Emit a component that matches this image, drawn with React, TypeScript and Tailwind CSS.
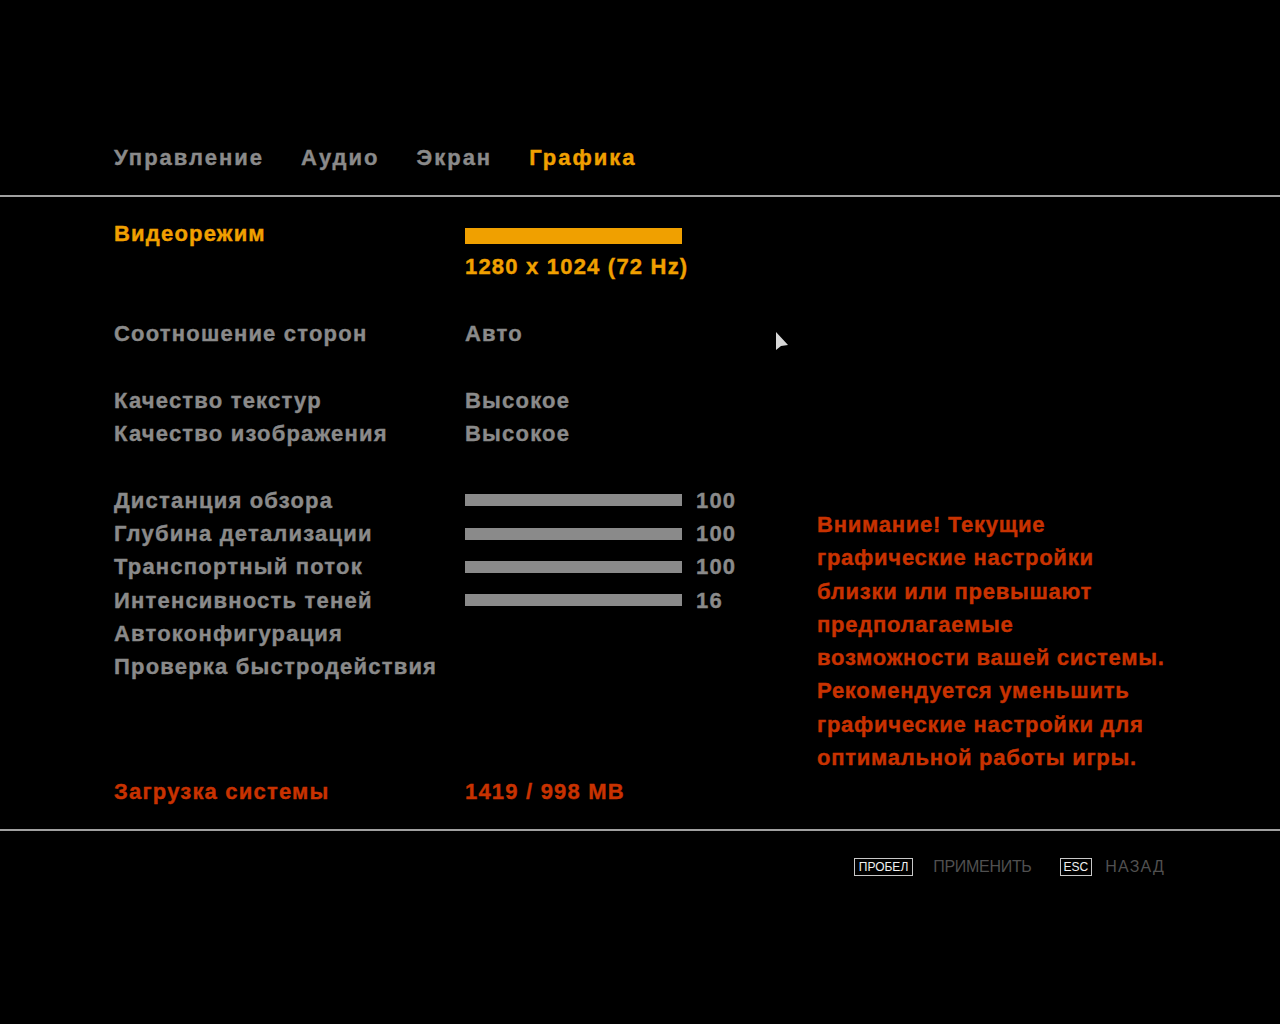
import React from "react";

const F = { fontFamily: '"Liberation Sans", Arial, sans-serif' };

function Row({ label, children, color = "text-[#8a8a8a]" }: { label?: string; children?: React.ReactNode; color?: string }) {
  return (
    <div className="flex h-[33.33px] items-center">
      <div className={`w-[351px] shrink-0 whitespace-nowrap ${color}`}>{label}</div>
      <div className="flex items-center whitespace-nowrap">{children}</div>
    </div>
  );
}

function Bar({ v }: { v: string }) {
  return (
    <>
      <div className="h-[12px] w-[217px] bg-[#8a8a8a]" />
      <div className="ml-[14px] text-[#8a8a8a]">{v}</div>
    </>
  );
}

export default function App() {
  return (
    <div className="relative h-[1024px] w-full overflow-hidden bg-black" style={F}>
      <div className="pt-[141px]">
        <div className="flex h-[33px] items-center gap-[37px] pl-[114px] text-[22px] font-bold tracking-[2px] [-webkit-text-stroke:0.4px_currentColor]">
          <span className="text-[#8a8a8a]">Управление</span>
          <span className="text-[#8a8a8a]">Аудио</span>
          <span className="text-[#8a8a8a]">Экран</span>
          <span className="text-[#f0a000]">Графика</span>
        </div>
        <div className="mt-[21px] h-[2px] w-full bg-[#a0a0a0]" />
        <div className="flex pl-[114px] pt-[20px] text-[22px] font-bold leading-[33px] tracking-[1.2px] [-webkit-text-stroke:0.4px_currentColor]">
          <div className="w-[703px] shrink-0">
            <Row label="Видеорежим" color="text-[#f0a000]">
              <div className="mt-[4px] h-[16px] w-[217px] bg-[#f0a000]" />
            </Row>
            <Row>
              <span className="text-[#f0a000]">1280 x 1024 (72 Hz)</span>
            </Row>
            <Row />
            <Row label="Соотношение сторон">
              <span className="text-[#8a8a8a]">Авто</span>
            </Row>
            <Row />
            <Row label="Качество текстур">
              <span className="text-[#8a8a8a]">Высокое</span>
            </Row>
            <Row label="Качество изображения">
              <span className="text-[#8a8a8a]">Высокое</span>
            </Row>
            <Row />
            <Row label="Дистанция обзора">
              <Bar v="100" />
            </Row>
            <Row label="Глубина детализации">
              <Bar v="100" />
            </Row>
            <Row label="Транспортный поток">
              <Bar v="100" />
            </Row>
            <Row label="Интенсивность теней">
              <Bar v="16" />
            </Row>
            <Row label="Автоконфигурация" />
            <Row label="Проверка быстродействия" />
            <div className="mt-[91px]">
              <Row label="Загрузка системы" color="text-[#c83200]">
                <span className="text-[#c83200]">1419 / 998 MB</span>
              </Row>
            </div>
          </div>
          <div className="w-[400px] shrink-0 whitespace-nowrap pt-[291px] leading-[33.3px] text-[#c83200] tracking-[0.75px]">
            <div>Внимание! Текущие</div>
            <div>графические настройки</div>
            <div>близки или превышают</div>
            <div>предполагаемые</div>
            <div>возможности вашей системы.</div>
            <div>Рекомендуется уменьшить</div>
            <div>графические настройки для</div>
            <div>оптимальной работы игры.</div>
          </div>
        </div>
        <div className="mt-[21px] h-[2px] w-full bg-[#a0a0a0]" />
        <div className="mt-[24px] flex items-center justify-end pr-[115px] text-[16px]">
          <span className="flex h-[18px] items-center border border-[#c8c8c8] px-[4px] text-[12px] leading-[16px] text-[#f0f0f0]">ПРОБЕЛ</span>
          <span className="ml-[20px] tracking-[-0.3px] text-[#505050]">ПРИМЕНИТЬ</span>
          <span className="ml-[28px] flex h-[18px] items-center border border-[#c8c8c8] px-[3px] text-[12px] leading-[16px] text-[#f0f0f0]">ESC</span>
          <span className="ml-[13px] tracking-[1.2px] text-[#505050]">НАЗАД</span>
        </div>
      </div>
      <svg className="absolute left-[776px] top-[332px]" width="14" height="20" viewBox="0 0 14 20">
        <path d="M0 0 L0 18 L5 14 L12 13 Z" fill="#d8d8d8" />
      </svg>
    </div>
  );
}
